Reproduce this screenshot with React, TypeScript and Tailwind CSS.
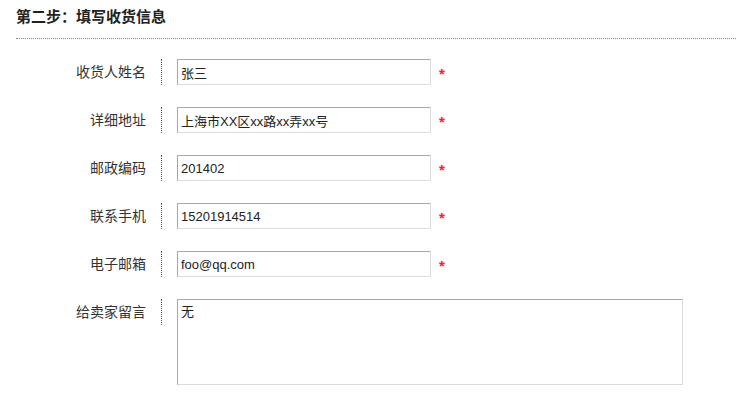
const fields = [
  { label: "收货人姓名", value: "张三" },
  { label: "详细地址", value: "上海市XX区xx路xx弄xx号" },
  { label: "邮政编码", value: "201402" },
  { label: "联系手机", value: "15201914514" },
  { label: "电子邮箱", value: "foo@qq.com" },
];

const font = "font-['Liberation_Sans','Noto_Sans_CJK_SC',sans-serif]";

function Label({ text }: { text: string }) {
  return (
    <div className="flex h-[26px] w-[146px] shrink-0 items-center justify-end border-r border-dotted border-r-[#555] pr-[15px] text-[14px] leading-[26px] text-[#333]">
      {text}
    </div>
  );
}

export default function App() {
  return (
    <div className={`min-h-[410px] w-[736px] bg-white pl-4 ${font}`}>
      {/* Step header */}
      <div className="border-b border-dotted border-b-[#888] pt-[7px] pb-[11px]">
        <h2 className="text-[15px] leading-5 font-bold text-[#222]">第二步：填写收货信息</h2>
      </div>

      <div className="flex flex-col gap-[22px] pt-5">
        {fields.map((f) => (
          <div key={f.label} className="flex items-start">
            <Label text={f.label} />
            <input
              defaultValue={f.value}
              className="ml-[15px] h-[26px] w-[254px] border border-t-[#a8a8a8] border-l-[#a8a8a8] border-r-[#dcdcdc] border-b-[#dcdcdc] pl-[3px] text-[13px] text-[#222] outline-none"
            />
            <span className="ml-[8px] mt-[5px] text-[15px] leading-5 font-bold text-[#f0203a]">*</span>
          </div>
        ))}

        <div className="flex items-start">
          <Label text="给卖家留言" />
          <textarea
            defaultValue="无"
            className="ml-[15px] h-[86px] w-[506px] resize-none border border-t-[#a8a8a8] border-l-[#a8a8a8] border-r-[#dcdcdc] border-b-[#dcdcdc] px-[3px] py-[2px] text-[13px] leading-5 text-[#222] outline-none"
          />
        </div>
      </div>
    </div>
  );
}
